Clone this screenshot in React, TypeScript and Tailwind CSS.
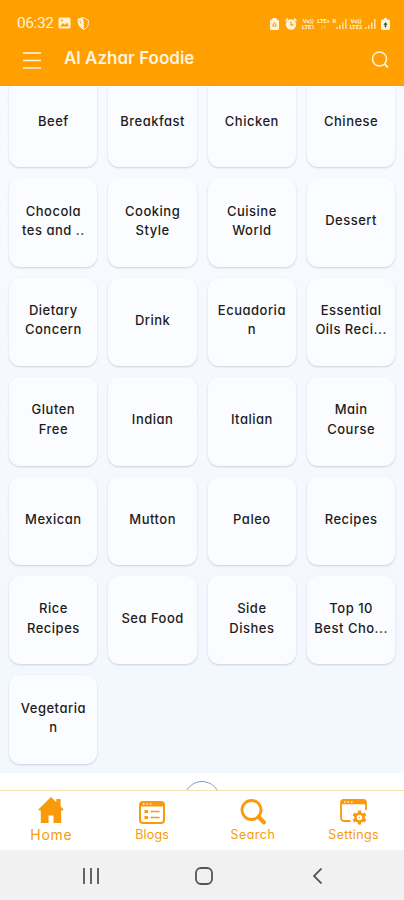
import clsx from "clsx";

const categories: string[][] = [
  ["Beef"],
  ["Breakfast"],
  ["Chicken"],
  ["Chinese"],
  ["Chocola", "tes and .."],
  ["Cooking", "Style"],
  ["Cuisine", "World"],
  ["Dessert"],
  ["Dietary", "Concern"],
  ["Drink"],
  ["Ecuadoria", "n"],
  ["Essential", "Oils Reci..."],
  ["Gluten", "Free"],
  ["Indian"],
  ["Italian"],
  ["Main", "Course"],
  ["Mexican"],
  ["Mutton"],
  ["Paleo"],
  ["Recipes"],
  ["Rice", "Recipes"],
  ["Sea Food"],
  ["Side", "Dishes"],
  ["Top 10", "Best Cho..."],
  ["Vegetaria", "n"],
];

function SignalBars({ className }: { className?: string }) {
  return (
    <svg viewBox="0 0 11 10" className={clsx("h-[10px] w-[11px]", className)} fill="currentColor">
      <path d="M0 8h1.6v2H0zM3 6h1.6v4H3zM6 3.5h1.6V10H6zM9 0h1.6v10H9z" opacity=".75" />
    </svg>
  );
}

function TinyLabel({ top, bottom }: { top: string; bottom?: string }) {
  return (
    <span className="flex h-[12px] flex-col text-center font-['Roboto',sans-serif] text-[6px] leading-[6px] font-bold tracking-tight">
      <span>{top}</span>
      {bottom ? <span>{bottom}</span> : null}
    </span>
  );
}

function StatusBar() {
  return (
    <div className="flex h-[30px] items-end justify-between pr-[14px] pl-[17px] text-[#fff3d6]">
      <div className="flex items-center">
        <span className="w-[37px] pt-px font-['Roboto',sans-serif] text-[15.5px] leading-[13px] tracking-[-0.4px]">
          06:32
        </span>
        <svg viewBox="0 0 13 12" className="ml-[4px] h-[12px] w-[13px]">
          <rect x=".5" y=".5" width="12" height="11" rx="1.5" fill="currentColor" />
          <path d="M2 9.5 5 6l2 2 2-2.5 2 4z" fill="#ff9f00" />
          <circle cx="4" cy="3.6" r="1" fill="#ff9f00" />
        </svg>
        <svg viewBox="0 0 12 13" className="ml-[6px] h-[13px] w-[12px]">
          <path d="M1 2.2 5.5.5 11.3 3v3.5c0 2.5-1.8 4.6-4.3 6C4 11 .8 8.5 1 2.2Z" fill="none" stroke="currentColor" />
          <path d="M1 2.2 5.5.5 6.8 5v7.4C3.5 11 .8 8 1 2.2Z" fill="currentColor" />
          <path d="m3 3.5 1 3.5M8.8 4l-2 4" stroke="#ff9f00" strokeWidth=".7" />
        </svg>
      </div>
      <div className="flex items-center">
        <svg viewBox="0 0 9 12" className="h-[12px] w-[9px]">
          <path d="M2.5 0h4v1.5h1A1.5 1.5 0 0 1 9 3v7.5A1.5 1.5 0 0 1 7.5 12h-6A1.5 1.5 0 0 1 0 10.5V3a1.5 1.5 0 0 1 1.5-1.5h1z" fill="currentColor" />
          <path d="M2.5 8 4.5 4.5 6.5 8z" fill="none" stroke="#ff9f00" />
        </svg>
        <svg viewBox="0 0 12 12" className="ml-[6px] h-[12px] w-[12px]">
          <circle cx="6" cy="6.5" r="5.2" fill="currentColor" />
          <path d="M.6 2.8 3 .7M11.4 2.8 9 .7" stroke="currentColor" strokeWidth="1.6" />
          <path d="M6 3.5v3.3h2.5" fill="none" stroke="#ff9f00" strokeWidth="1.2" />
        </svg>
        <div className="ml-[5px] flex h-[12px] w-[74px] items-center justify-between">
          <TinyLabel top="Vo))" bottom="LTE1" />
          <TinyLabel top="LTE+" bottom="↓↑" />
          <TinyLabel top="R" />
          <SignalBars className="-ml-[3px]" />
          <TinyLabel top="Vo))" bottom="LTE2" />
          <SignalBars />
        </div>
        <svg viewBox="0 0 9 12" className="ml-[5px] h-[12px] w-[9px]">
          <path d="M3 0h3v1.5h1.5A1.5 1.5 0 0 1 9 3v7.5A1.5 1.5 0 0 1 7.5 12h-6A1.5 1.5 0 0 1 0 10.5V3a1.5 1.5 0 0 1 1.5-1.5H3z" fill="currentColor" />
          <path d="M4.5 4.5 3 6.5h1V9h1V6.5h1z" fill="#46605c" stroke="#46605c" strokeWidth=".8" />
        </svg>
      </div>
    </div>
  );
}

function Header() {
  return (
    <header className="h-[86px] shrink-0 bg-[#ff9f00]">
      <StatusBar />
      <div className="flex h-[56px] items-center pr-[15px] pl-[23px] text-[#fff3df]">
        <svg viewBox="0 0 18 17" className="mt-[4px] h-[17px] w-[18px]" stroke="currentColor" strokeWidth="1.4">
          <path d="M0 1h18M0 8.5h18M0 16h18" />
        </svg>
        <h1 className="ml-[23px] grow text-[17px] leading-6 font-semibold whitespace-nowrap">
          Al Azhar Foodie
        </h1>
        <svg viewBox="0 0 18 18" className="mt-[4px] h-[18px] w-[18px]" fill="none" stroke="currentColor" strokeWidth="1.5">
          <circle cx="8.5" cy="8" r="7" />
          <path d="m13.5 13 3.5 3.5" strokeWidth="1.8" />
        </svg>
      </div>
    </header>
  );
}

function CategoryCard({ lines }: { lines: string[] }) {
  return (
    <button
      type="button"
      className="flex h-[88.4px] flex-col items-center justify-center rounded-[11px] bg-[#fbfcff] pb-[3px] text-[13px] leading-[19.4px] font-medium tracking-[0.5px] text-[#1d1d20] shadow-[0_1px_2px_rgba(60,70,90,0.22)]"
    >
      {lines.map((line) => (
        <span key={line} className="-mr-[0.5px] whitespace-nowrap">
          {line}
        </span>
      ))}
    </button>
  );
}

function HomeIcon() {
  return (
    <svg viewBox="0 0 26 26" className="-mt-[3px] size-[26px]" fill="currentColor">
      <path d="M13 0 .4 12.5 2 14l.8-.7V26h7.7v-7.5h5V26h7.7V13.3l.8.7 1.6-1.5-3-3V2h-4.3v3.3z" />
    </svg>
  );
}

function BlogsIcon() {
  return (
    <svg viewBox="0 0 26 23" className="mt-px h-[23px] w-[26px]" fill="none" stroke="currentColor">
      <rect x="1" y="1" width="24" height="21" rx="3" strokeWidth="2" />
      <path d="M1 3.5h24" strokeWidth="4" />
      <path d="M4 3h1.5M7.5 3H9M11 3h1.5" stroke="#fff3df" strokeWidth="1.3" />
      <path d="M5.5 10.5H9M5.5 16.5H9" strokeWidth="3" />
      <path d="M11.5 10.5h9M11.5 16.5h9" strokeWidth="1.3" />
    </svg>
  );
}

function SearchIcon() {
  return (
    <svg viewBox="0 0 26 26" className="size-[26px]" fill="none" stroke="currentColor">
      <circle cx="11.5" cy="11" r="9.5" strokeWidth="2.8" />
      <path d="m18.500 18 5.500 5.500" strokeWidth="4" strokeLinecap="round" />
    </svg>
  );
}

function SettingsIcon() {
  return (
    <svg viewBox="0 0 27 26" className="h-[26px] w-[27px]" fill="none" stroke="currentColor">
      <path d="M10.5 22H4a3 3 0 0 1-3-3V3.5A2.5 2.5 0 0 1 3.5 1h20A2.5 2.5 0 0 1 26 3.5V11" strokeWidth="1.8" />
      <path d="M1 3.3h25" strokeWidth="4" />
      <path d="M4 3h1.5M7.5 3H9M11 3h1.5" stroke="#fff3df" strokeWidth="1.3" />
      <circle cx="19.5" cy="18.5" r="4" strokeWidth="2.6" />
      <path
        d="M19.5 11.5v3M19.5 22.5v3M13.4 15l2.6 1.5M23 20.500l2.600 1.500M13.400 22l2.600-1.500M23 16.500l2.600-1.500"
        strokeWidth="3.2"
      />
      <circle cx="19.5" cy="18.5" r=".7" fill="currentColor" stroke="none" />
    </svg>
  );
}

const tabs = [
  { label: "Home", icon: <HomeIcon />, className: "text-[14px] tracking-[0.7px]" },
  { label: "Blogs", icon: <BlogsIcon />, className: "text-[12.5px] tracking-[0.2px]" },
  { label: "Search", icon: <SearchIcon />, className: "text-[12.5px] tracking-[0.5px]" },
  { label: "Settings", icon: <SettingsIcon />, className: "text-[12.5px] tracking-[0.35px]" },
];

function TabBar() {
  return (
    <nav className="grid h-[60px] shrink-0 grid-cols-4 border-t border-[#f3e3b0] bg-white pl-px text-[#f99a0c]">
      {tabs.map((tab) => (
        <a key={tab.label} href="#" className="flex flex-col items-center">
          <span className="flex h-[35px] items-center pt-[6px]">{tab.icon}</span>
          <span className={clsx("leading-[18px]", tab.className)}>{tab.label}</span>
        </a>
      ))}
    </nav>
  );
}

function SystemBar() {
  return (
    <div className="flex h-[50px] shrink-0 items-center bg-[#f1f1f1] pt-[2px] pl-[82px] text-[#555]">
      <svg viewBox="0 0 18 16" className="h-[16px] w-[18px]" stroke="currentColor" strokeWidth="1.8">
        <path d="M2 0v16M9 0v16M16 0v16" />
      </svg>
      <svg viewBox="0 0 18 18" className="ml-[95px] h-[18px] w-[18px]" fill="none" stroke="currentColor" strokeWidth="1.8">
        <rect x="1" y="1" width="16" height="16" rx="5" />
      </svg>
      <svg viewBox="0 0 9 16" className="ml-[100px] h-[16px] w-[9px]" fill="none" stroke="currentColor" strokeWidth="1.8">
        <path d="M8.5.5 1 8l7.5 7.5" />
      </svg>
    </div>
  );
}

export default function App() {
  return (
    <div className="flex h-[900px] w-[404px] flex-col overflow-hidden bg-white font-['Inter',sans-serif] [font-feature-settings:'cv11']">
      <Header />
      <main className="h-[687px] shrink-0 overflow-hidden bg-linear-to-b from-[#f8fafe] to-[#f3f7fe]">
        <div className="-mt-[7px] grid grid-cols-4 gap-[11px] px-[9px]">
          {categories.map((lines) => (
            <CategoryCard key={lines.join("")} lines={lines} />
          ))}
        </div>
      </main>
      <div className="flex h-[17px] shrink-0 justify-center overflow-hidden bg-white pt-[8px]">
        <div className="size-[36px] shrink-0 rounded-full border-[1.5px] border-[#7f95dc]" />
      </div>
      <TabBar />
      <SystemBar />
    </div>
  );
}
